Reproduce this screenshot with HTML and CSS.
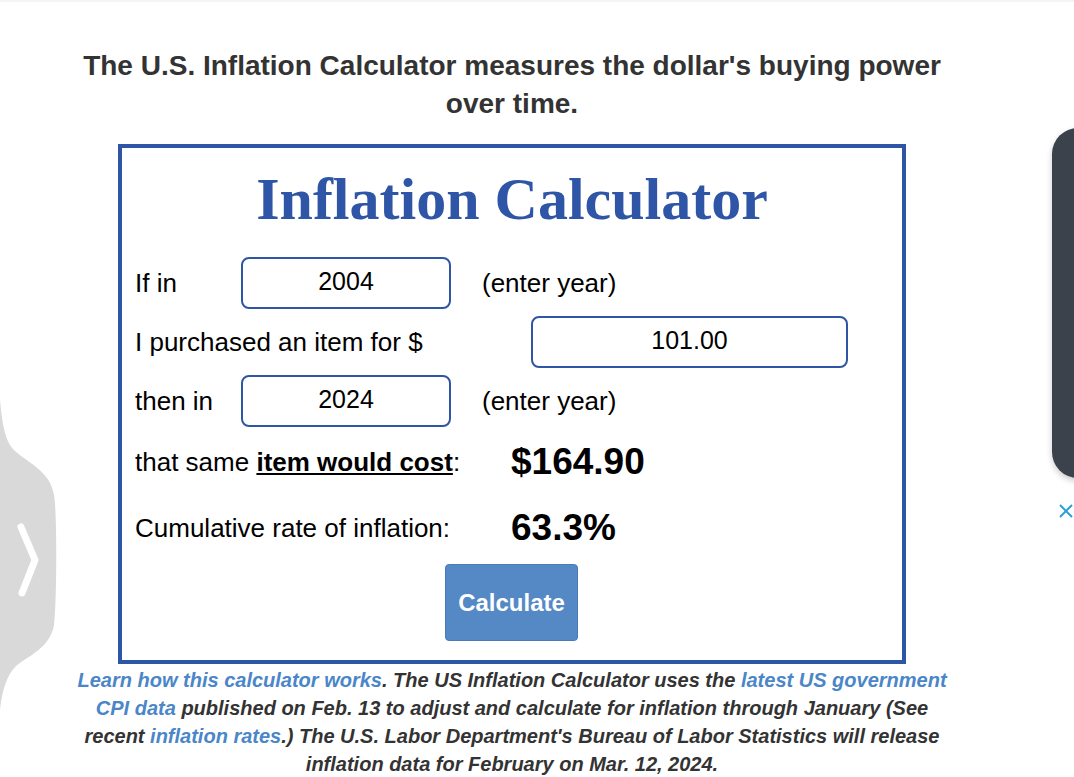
FILE: index.html
```html
<!DOCTYPE html>
<html>

<head>
	<title>US Inflation Calculator</title>
	<meta charset="UTF-8">
	<link rel="stylesheet" href="styles.css">
	<meta name="viewport" content="width=device-width, initial-scale=1">
</head>

<body>
	<div id="main">
		<h2 class="intro">The U.S. Inflation Calculator measures the dollar's buying power over time.</h2>

		<div class="calc-box">
			<h1 class="calc-title">Inflation Calculator</h1>

			<div class="calc-row">
				<span class="label label-short">If in</span>
				<div class="field field-year">2004</div>
				<span class="note">(enter year)</span>
			</div>
			<div class="calc-row">
				<span class="label label-long">I purchased an item for $</span>
				<div class="field field-amount">101.00</div>
			</div>
			<div class="calc-row">
				<span class="label label-short">then in</span>
				<div class="field field-year">2024</div>
				<span class="note">(enter year)</span>
			</div>
			<div class="calc-row result-row">
				<span class="label label-result">that same <u><b>item would cost</b></u>:</span>
				<span class="result">$164.90</span>
			</div>
			<div class="calc-row result-row rate-row">
				<span class="label label-result">Cumulative rate of inflation:</span>
				<span class="result">63.3%</span>
			</div>
			<div class="button-row">
				<div id="calculate-button">Calculate</div>
			</div>
		</div>

		<p class="source-note">
			<a href="#">Learn how this calculator works</a>. The US Inflation Calculator uses the <a href="#">latest US government CPI data</a> published on Feb. 13 to adjust and calculate for inflation through January (See recent <a href="#">inflation rates</a>.) The U.S. Labor Department's Bureau of Labor Statistics will release inflation data for February on Mar. 12, 2024.
		</p>
	</div>

	<!-- slide-out tab on the left -->
	<div class="side-tab">
		<svg width="60" height="310" viewBox="0 0 60 310">
			<path d="M0 0 C2 20 4 40 14 50 C26 62 50 70 54 95 C57 110 57 200 54 225 C50 248 28 256 16 266 C6 276 2 292 0 310 Z" fill="#d9d9d9" />
			<path d="M21 127 L35 160 L22 193" fill="none" stroke="#fff" stroke-width="7" stroke-linecap="round" stroke-linejoin="round" />
		</svg>
	</div>

	<!-- ad panel on the right -->
	<div class="side-panel"></div>
	<svg class="side-close" width="16" height="16" viewBox="0 0 16 16">
		<path d="M2 2 L14 14 M14 2 L2 14" stroke="#2b9fd8" stroke-width="2" />
	</svg>
</body>

</html>
```

FILE: styles.css
```css
		body {
			margin: 0;
			padding: 8px;
			background: #fff;
			border-top: 2px solid #f4f4f4;
			font-family: "Liberation Sans", Arial, sans-serif;
			color: #000;
			overflow: hidden;
		}

		#main {
			width: 900px;
			margin-left: 54px;
		}

		.intro {
			margin: 37px 0 0;
			font-size: 28px;
			line-height: 38px;
			font-weight: bold;
			color: #333;
			text-align: center;
		}

		.calc-box {
			margin: 21px auto 0;
			border: 4px solid #2f56a6;
			padding: 0 13px;
			box-sizing: border-box;
			width: 788px;
			height: 520px;
		}

		.calc-title {
			margin: 16px 0 23px;
			font-family: "Liberation Serif", "Times New Roman", serif;
			font-size: 60px;
			line-height: 70px;
			font-weight: bold;
			color: #2f56a6;
			text-align: center;
		}

		.calc-row {
			display: flex;
			align-items: center;
			height: 52px;
			margin-bottom: 7px;
			font-size: 26px;
		}

		.label-short {
			width: 106px;
		}

		.label-long {
			width: 396px;
		}

		.label-result {
			width: 376px;
		}

		.field {
			height: 52px;
			box-sizing: border-box;
			border: 2px solid #2f56a6;
			border-radius: 8px;
			padding-bottom: 4px;
			display: flex;
			align-items: center;
			justify-content: center;
			font-size: 25px;
		}

		.field-year {
			width: 210px;
		}

		.field-amount {
			width: 317px;
		}

		.note {
			margin-left: 31px;
		}

		/* sibling margins collapse, so these are the real gaps */
		.result-row {
			margin-top: 9px;
		}

		.rate-row {
			margin-top: 14px;
		}

		.result {
			font-size: 37px;
			font-weight: bold;
		}

		.button-row {
			display: flex;
			padding-left: 310px;
			margin-top: 10px;
		}

		#calculate-button {
			width: 133px;
			height: 77px;
			box-sizing: border-box;
			background-color: #5589c5;
			border: 1px solid #4a7bb9;
			border-radius: 4px;
			color: #fff;
			font-size: 24px;
			font-weight: bold;
			display: flex;
			align-items: center;
			justify-content: center;
		}

		.source-note {
			width: 874px;
			margin: 2px auto 0;
			font-size: 20px;
			line-height: 28px;
			font-weight: bold;
			font-style: italic;
			color: #333;
			text-align: center;
		}

		.source-note a {
			color: #4a86c8;
			text-decoration: none;
		}

		.side-tab {
			position: absolute;
			left: 0;
			top: 400px;
		}

		.side-panel {
			position: absolute;
			left: 1052px;
			top: 128px;
			width: 60px;
			height: 350px;
			background: #3c424b;
			border-radius: 26px;
			box-shadow: 0 3px 6px rgba(0, 0, 0, 0.2);
		}

		.side-close {
			position: absolute;
			left: 1058px;
			top: 503px;
		}
```
